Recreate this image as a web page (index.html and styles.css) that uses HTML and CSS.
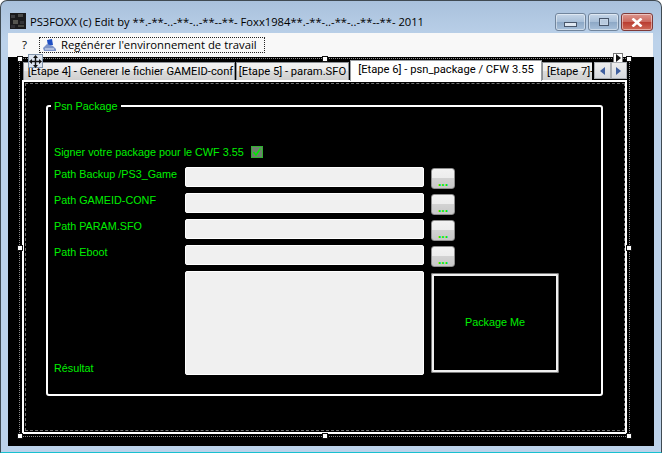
FILE: index.html
```html
<!DOCTYPE html>
<html lang="fr">
<head>
<meta charset="utf-8">
<title>PS3FOXX</title>
<link rel="stylesheet" href="styles.css">
</head>
<body>
<div class="window">
  <div class="titlebar">
    <svg class="app-icon" width="16" height="16" viewBox="0 0 16 16">
      <rect width="16" height="16" fill="#1b1b1d"/>
      <rect x="1" y="2" width="4" height="3" fill="#3c3c40"/>
      <rect x="8" y="1" width="5" height="3" fill="#4a4a48"/>
      <rect x="3" y="7" width="5" height="4" fill="#55554f"/>
      <rect x="10" y="8" width="4" height="3" fill="#333336"/>
      <rect x="1" y="12" width="4" height="3" fill="#2f2f33"/>
      <rect x="8" y="12" width="6" height="2" fill="#45453f"/>
    </svg>
    <span class="title-text">PS3FOXX (c) Edit by **.-**-..-**-..-**--**- Foxx1984**.-**-..-**-..-**--**- 2011</span>
    <div class="controls">
      <div class="ctl"><span class="glyph-min"></span></div>
      <div class="ctl"><span class="glyph-max"></span></div>
      <div class="ctl close">
        <svg width="12" height="9" viewBox="0 0 12 9"><path d="M1.5 0.5 L10.5 8.5 M10.5 0.5 L1.5 8.5" stroke="#fff" stroke-width="2.6"/></svg>
      </div>
    </div>
  </div>
  <div class="menu">
    <span class="menu-item">?</span>
    <div class="menu-button">
      <svg width="14" height="13" viewBox="0 0 14 13">
        <path d="M4 1 L9 0 L10 6 L5 7 Z" fill="#1f4fc4"/>
        <path d="M0 9 L4 5 L10 7 L13 10 L13 12 L1 12 Z" fill="#7c93c8"/>
        <path d="M2 10 L11 10" stroke="#e4e8f2"/>
      </svg>
      <span>Regénérer l'environnement de travail</span>
    </div>
  </div>
  <div class="client">
    <div class="tabctl">
      <div class="selection">
        <span class="handle h-tl"></span><span class="handle h-tc"></span><span class="handle h-tr"></span>
        <span class="handle h-ml"></span><span class="handle h-mr"></span>
        <span class="handle h-bl"></span><span class="handle h-bc"></span><span class="handle h-br"></span>
        <span class="move">
          <svg width="13" height="13" viewBox="0 0 13 13"><path d="M6.5 0 L9 3 L7.2 3 L7.2 5.8 L10 5.8 L10 4 L13 6.5 L10 9 L10 7.2 L7.2 7.2 L7.2 10 L9 10 L6.5 13 L4 10 L5.8 10 L5.8 7.2 L3 7.2 L3 9 L0 6.5 L3 4 L3 5.8 L5.8 5.8 L5.8 3 L4 3 Z" fill="#111"/></svg>
        </span>
        <span class="smart"><svg width="5" height="8" viewBox="0 0 5 8"><path d="M0 0 L5 4 L0 8 Z" fill="#111"/></svg></span>
      </div>
      <div class="tabstrip">
        <span class="tab t1">[Etape 4] - Generer le fichier GAMEID-conf</span>
        <span class="tab t2">[Etape 5] - param.SFO</span>
        <span class="tab active">[Etape 6] - psn_package / CFW 3.55</span>
        <span class="tab t4">[Etape 7]-</span>
        <div class="scroller">
          <span class="scroll-btn"><svg width="5" height="8" viewBox="0 0 5 8"><path d="M5 0 L0 4 L5 8 Z" fill="#3f5f9f"/></svg></span>
          <span class="scroll-btn"><svg width="5" height="8" viewBox="0 0 5 8"><path d="M0 0 L5 4 L0 8 Z" fill="#3f5f9f"/></svg></span>
        </div>
      </div>
      <div class="page">
        <div class="page-inner">
          <div class="group">
            <span class="legend">Psn Package</span>
            <div class="check-row">
              <span class="label">Signer votre package pour le CWF 3.55</span>
              <span class="checkbox"><svg width="10" height="10" viewBox="0 0 10 10"><path d="M1.5 5 L4 8 L8.5 1.5" fill="none" stroke="#00ee00" stroke-width="1.5"/></svg></span>
            </div>
            <div class="form">
              <span class="label">Path Backup /PS3_Game</span>
              <div class="input"></div>
              <span class="browse">...</span>
              <span class="label">Path GAMEID-CONF</span>
              <div class="input"></div>
              <span class="browse">...</span>
              <span class="label">Path PARAM.SFO</span>
              <div class="input"></div>
              <span class="browse">...</span>
              <span class="label">Path Eboot</span>
              <div class="input"></div>
              <span class="browse">...</span>
              <span class="label result">Résultat</span>
              <div class="input large"></div>
              <div class="package">Package Me</div>
            </div>
          </div>
        </div>
      </div>
    </div>
  </div>
</div>
</body>
</html>
```

FILE: styles.css
```css
* { box-sizing: border-box; }
html, body { margin: 0; padding: 0; background: #fff; }
body { width: 663px; height: 456px; overflow: hidden; font-family: "Open Sans", "Liberation Sans", sans-serif; }

.window {
  width: 662px;
  height: 453px;
  display: flex;
  flex-direction: column;
  padding: 0 7px 6px;
  border: 1px solid #3f4a52;
  border-bottom-color: #18c0d0;
  border-radius: 7px 7px 0 0;
  background: linear-gradient(180deg, #a9c1dc 0, #bcd2ea 40px, #bcd2ea 100%);
}

.titlebar { height: 32px; flex: none; display: flex; align-items: flex-start; position: relative; }
.app-icon { margin: 12px 0 0 2px; flex: none; }
.title-text { margin: 12px 0 0 4px; font-size: 11.2px; line-height: 18px; color: #000; white-space: nowrap; }
.controls { position: absolute; right: 1px; top: 12px; display: flex; gap: 2px; }
.ctl {
  width: 31px; height: 18px; display: flex; align-items: center; justify-content: center;
  border: 1px solid #71859c; border-radius: 3px;
  background: linear-gradient(180deg, #c6d6e8 0, #a8bfd8 48%, #8da8c6 52%, #a7c0da 100%);
  box-shadow: inset 0 0 0 1px rgba(255,255,255,.45);
}
.ctl.close {
  width: 32px; border-color: #7f3a38;
  background: linear-gradient(180deg, #dc968e 0, #cc6a5f 48%, #ba3d31 52%, #cf6a58 100%);
}
.glyph-min { width: 13px; height: 5px; margin-top: 5px; background: #dfe8f2; border: 1px solid #48566a; }
.glyph-max { width: 10px; height: 8px; border: 1px solid #48566a; background: #b8cade; box-shadow: inset 0 0 0 1px #c4d4e6; }

.menu {
  height: 24px; flex: none; display: flex; align-items: flex-start;
  background: #f8f8f8; font-size: 12px; color: #000; margin-right: 1px;
}
.menu-item { margin: 3px 0 0 14px; line-height: 18px; font-size: 11.5px; }
.menu-button {
  margin: 4px 0 0 12px; width: 226px; height: 16px; padding-left: 3px;
  display: flex; align-items: center; gap: 4px;
  border: 1px dotted #222; font-size: 11.3px; line-height: 14px; white-space: nowrap;
}

.client { flex: 1; background: #000; padding: 3px 27px 12px 14px; display: flex; }
.tabctl { position: relative; flex: 1; display: flex; flex-direction: column; }

.selection {
  position: absolute; left: -3px; top: -2px; right: -3px; bottom: -3px;
  border: 1px dotted #8c8c8c; z-index: 3; pointer-events: none;
}
.handle { position: absolute; width: 6px; height: 6px; background: #fff; border: 1px solid #111; }
.h-tl { left: -3px; top: -3px; }
.h-tc { left: calc(50% - 3px); top: -3px; }
.h-tr { right: -3px; top: -3px; }
.h-ml { left: -3px; top: calc(50% - 3px); }
.h-mr { right: -3px; top: calc(50% - 3px); }
.h-bl { left: -3px; bottom: -3px; }
.h-bc { left: calc(50% - 3px); bottom: -3px; }
.h-br { right: -3px; bottom: -3px; }
.move {
  position: absolute; left: 8px; top: -5px; width: 15px; height: 14px;
  display: flex; align-items: center; justify-content: center;
  background: #dde5f0; border: 1px solid #8296ad;
}
.smart {
  position: absolute; right: 6px; top: -6px; width: 10px; height: 9px;
  display: flex; align-items: center; justify-content: center;
  background: #fff; border: 1px solid #777; border-bottom: 0;
}

.tabstrip { height: 20px; flex: none; display: flex; align-items: flex-start; position: relative; padding-left: 1px; }
.tab {
  height: 18px; margin-top: 2px; flex: none; display: flex; align-items: center; justify-content: center;
  font-family: Roboto, "Liberation Sans", sans-serif;
  font-size: 11.2px; color: #000; white-space: nowrap;
  border: 1px solid #8b8f94; border-bottom: 0; margin-right: 1px;
  background: linear-gradient(180deg, #f3f3f3 0, #ececec 45%, #dcdcdc 50%, #cfcfcf 100%);
}
.t1 { width: 212px; padding-left: 3px; }
.t2 { width: 113px; }
.tab.active {
  width: 192px; height: 21px; margin-top: 0; margin-right: 0; background: #fff; align-items: flex-start;
  padding-top: 2px; border-color: #9a9ea3; position: relative; z-index: 1;
}
.t4 { width: 50px; justify-content: flex-start; padding-left: 4px; border-right: 0; margin-right: 0; }
.scroller { position: absolute; left: 572px; top: 2px; width: 33px; height: 17px; display: flex; background: #fff; z-index: 2; }
.scroll-btn {
  flex: 1; display: flex; align-items: center; justify-content: center;
  border: 1px solid #a9adb2; background: linear-gradient(180deg, #eee 0, #d6d9de 100%);
}

.page { flex: 1; border: 2px solid #fff; background: #000; display: flex; }
.page-inner { flex: 1; margin: 1px 0 1px 1px; border: 1px dashed #6e6e6e; padding: 21px 21px 34px 20px; display: flex; }

.group {
  position: relative; flex: 1; border: 2px solid #fff; border-radius: 3px;
  padding: 38px 0 0 6px; color: #00f000; font-family: "Liberation Sans", Arial, sans-serif; font-size: 10.8px;
}
.legend { position: absolute; left: 3px; top: -9px; padding: 0 3px; background: #000; line-height: 16px; }
.label { line-height: 14px; white-space: nowrap; }
.check-row { display: flex; align-items: center; height: 14px; gap: 7px; margin-bottom: 8px; }
.checkbox {
  width: 12px; height: 12px; display: flex; align-items: center; justify-content: center;
  background: #6e7f6e; border: 1px solid #2fb02f;
}
.form { display: grid; grid-template-columns: 131px 239px auto; grid-template-rows: 20px 20px 20px 20px 104px; row-gap: 6px; justify-items: start; }
.input { width: 239px; height: 100%; background: #f0f0f0; border: 1px solid #fff; border-radius: 2px; }
.browse {
  width: 24px; height: 21px; margin: 1px 0 0 7px; padding-top: 7px;
  display: block; text-align: center; line-height: 12px; font-size: 12px; font-weight: bold; color: #00f000;
  border: 1px solid #8d8d8d; border-radius: 3px;
  background: linear-gradient(180deg, #f2f2f2 0, #ededed 45%, #d2d2d2 50%, #c8c8c8 100%);
}
.label.result { align-self: end; }
.package {
  width: 128px; height: 100px; margin: 2px 0 0 7px;
  display: flex; align-items: center; justify-content: center; padding-bottom: 2px;
  border: 3px solid #f0f0f0; border-radius: 2px; outline: 1px solid #7a7a7a; outline-offset: -1px;
}
```
